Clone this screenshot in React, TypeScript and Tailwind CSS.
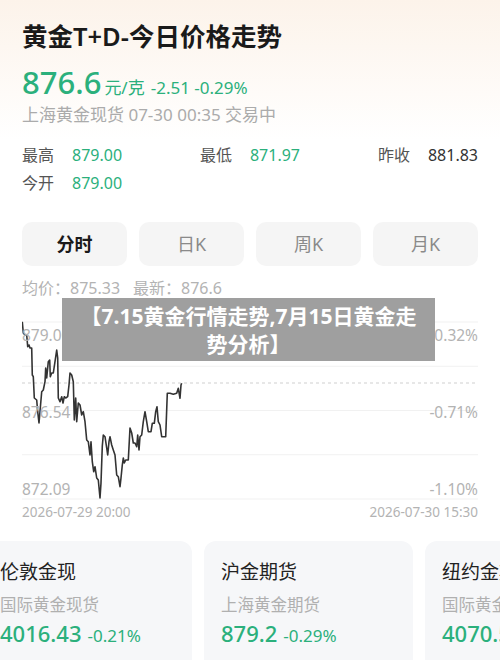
import React from 'react'

const linePoints =
  '22.3,321.7 23.3,333 25,335 26.7,335 27.7,346.7 29,345 30,348 31.7,348 32.3,375 33.3,376.7 34.3,398 36.7,400 37.7,411.7 39,423 40.3,408 41.7,391.7 43.3,390 45,381.7 45.7,368 46.7,378 48.3,361.7 49.7,360 50.3,376.7 51.7,373 53.3,373 55,361.7 56.7,350 57.7,358 58.3,398 60,401.7 61.7,396.7 63,403 64.3,396.7 65.7,398 67.7,396.7 69,385 70,373 71.7,375 73.3,381.7 74.3,420 75.7,398 76.7,421.7 78.3,403 80,405 81.7,415 83.3,411.7 85,421.7 86.7,440 88.3,441.7 90,455 91,441.7 92.3,461.7 93.7,471.7 95,466.7 96.7,478 98.3,480 100,498 101,483 102.3,446 103.3,435 105,436.7 106.7,448 107.7,455 109,441.7 110,436.7 111.7,445 113.3,450 115,455 116.7,475 118.3,476.7 120,486.7 121,478 122.3,465 123.3,458 124.3,463 125.7,460 128.3,460 130,428 131.7,433 133.3,443 135,443 136.7,446.7 137.7,435 139,450 140,436.7 141.7,435 143.3,421.7 145,411.7 146.7,421.7 148.3,431.7 151,431.7 152.3,423.3 154.3,423.3 155.7,411.7 157,406.7 158.3,421.7 160,425 161.7,436.7 165.7,436.7 167.3,393.3 170,393.3 173.3,394.3 176.7,393.3 178.3,388.3 180,398.3 181,385 181.7,383.3'

const stats = [
  { label: '最高', value: '879.00', green: true },
  { label: '最低', value: '871.97', green: true },
  { label: '昨收', value: '881.83', green: false },
]

const tabs = ['分时', '日K', '周K', '月K']

const cards = [
  { name: '伦敦金现', sub: '国际黄金现货', price: '4016.43', pct: '-0.21%' },
  { name: '沪金期货', sub: '上海黄金期货', price: '879.2', pct: '-0.29%' },
  { name: '纽约金期', sub: '国际黄金期货', price: '4070.50', pct: '-0.20%' },
]

const PriceChart = () => (
  <div className="relative h-[200px] w-full">
    <svg className="absolute inset-0" width="456" height="200" viewBox="22 300 456 200">
      {[322, 366.25, 410.5, 454.75, 499].map((y) => (
        <line key={y} x1="22" x2="478" y1={y} y2={y} stroke="#f1f1f1" strokeWidth="1" />
      ))}
      <line x1="22" x2="478" y1="383" y2="383" stroke="#cfcfcf" strokeWidth="1" strokeDasharray="3 3" />
      <polyline points={linePoints} fill="none" stroke="#333333" strokeWidth="1.6" strokeLinejoin="round" />
    </svg>
    <div className="absolute left-0 top-[25px] text-[15.5px] leading-[20px] text-[#b3b3b3]">879.00</div>
    <div className="absolute left-0 top-[102px] text-[15.5px] leading-[20px] text-[#b3b3b3]">876.54</div>
    <div className="absolute left-0 top-[179px] text-[15.5px] leading-[20px] text-[#b3b3b3]">872.09</div>
    <div className="absolute right-0 top-[25px] text-[15.5px] leading-[20px] text-[#b3b3b3]">-0.32%</div>
    <div className="absolute right-0 top-[102px] text-[15.5px] leading-[20px] text-[#b3b3b3]">-0.71%</div>
    <div className="absolute right-0 top-[179px] text-[15.5px] leading-[20px] text-[#b3b3b3]">-1.10%</div>
  </div>
)

export default function App() {
  return (
    <div
      className="relative h-[660px] w-[500px] overflow-hidden bg-[linear-gradient(180deg,#fcf3ea_0px,#ffffff_140px)]"
      style={{ fontFamily: '"Noto Sans", "Noto Sans CJK SC", sans-serif' }}
    >
      <div className="px-[22px] pt-[20px]">
        <h1 className="text-[25.5px] font-semibold leading-[32px] text-[#1a1a1a]">黄金T+D-今日价格走势</h1>

        <div className="mt-[11px] whitespace-nowrap text-[31px] font-medium leading-[38px] text-[#2bb07c]">
          876.6
          <span className="ml-[3px] text-[17px] font-normal leading-[17px]">元/克</span>
          <span className="ml-[6px] text-[17px] font-normal leading-[17px]">-2.51 -0.29%</span>
        </div>

        <div className="mt-[2px] text-[17px] leading-[24px] text-[#ababab]">上海黄金现货 07-30 00:35 交易中</div>

        <div className="mt-[14px] flex justify-between text-[16px] leading-[28px]">
          {stats.map((s) => (
            <div key={s.label} className="flex gap-[18px]">
              <span className="text-[#555]">{s.label}</span>
              <span className={s.green ? 'text-[#2bb07c]' : 'text-[#333]'}>{s.value}</span>
            </div>
          ))}
        </div>
        <div className="flex gap-[18px] text-[16px] leading-[28px]">
          <span className="text-[#555]">今开</span>
          <span className="text-[#2bb07c]">879.00</span>
        </div>

        <div className="mt-[25px] grid grid-cols-4 gap-[12px]">
          {tabs.map((t, i) => (
            <div
              key={t}
              className={`flex h-[44px] items-center justify-center rounded-[10px] bg-[#f5f5f5] text-[18px] ${
                i === 0 ? 'font-bold text-[#1a1a1a]' : 'text-[#8a8a8a]'
              }`}
            >
              {t}
            </div>
          ))}
        </div>

        <div className="mt-[10px] flex gap-[13px] text-[16px] leading-[24px] text-[#b3b3b3]">
          <span>均价：875.33</span>
          <span>最新：876.6</span>
        </div>

        <PriceChart />

        <div className="mt-[2px] flex justify-between text-[13.5px] leading-[20px] text-[#b3b3b3]">
          <span>2026-07-29 20:00</span>
          <span>2026-07-30 15:30</span>
        </div>
      </div>

      <div className="-ml-[17px] mt-[19px] flex gap-[12px]">
        {cards.map((c) => (
          <div key={c.name} className="h-[140px] w-[209px] shrink-0 rounded-[12px] bg-[#f6f7f9] px-[17px] pt-[17px]">
            <div className="text-[19px] leading-[28px] text-[#222]">{c.name}</div>
            <div className="mt-[7px] text-[16.5px] leading-[24px] text-[#b0b0b0]">{c.sub}</div>
            <div className="mt-[1px] whitespace-nowrap text-[22px] font-medium leading-[30px] text-[#2bb07c]">
              {c.price}
              <span className="ml-[6px] text-[17px] font-normal leading-[17px]">{c.pct}</span>
            </div>
          </div>
        ))}
      </div>

      <div className="absolute left-[62px] top-[298px] flex h-[63px] w-[373px] items-center justify-center bg-[#9f9f9f] px-[12px] text-center text-[21px] font-bold leading-[28px] text-white">
        【7.15黄金行情走势,7月15日黄金走势分析】
      </div>
    </div>
  )
}
